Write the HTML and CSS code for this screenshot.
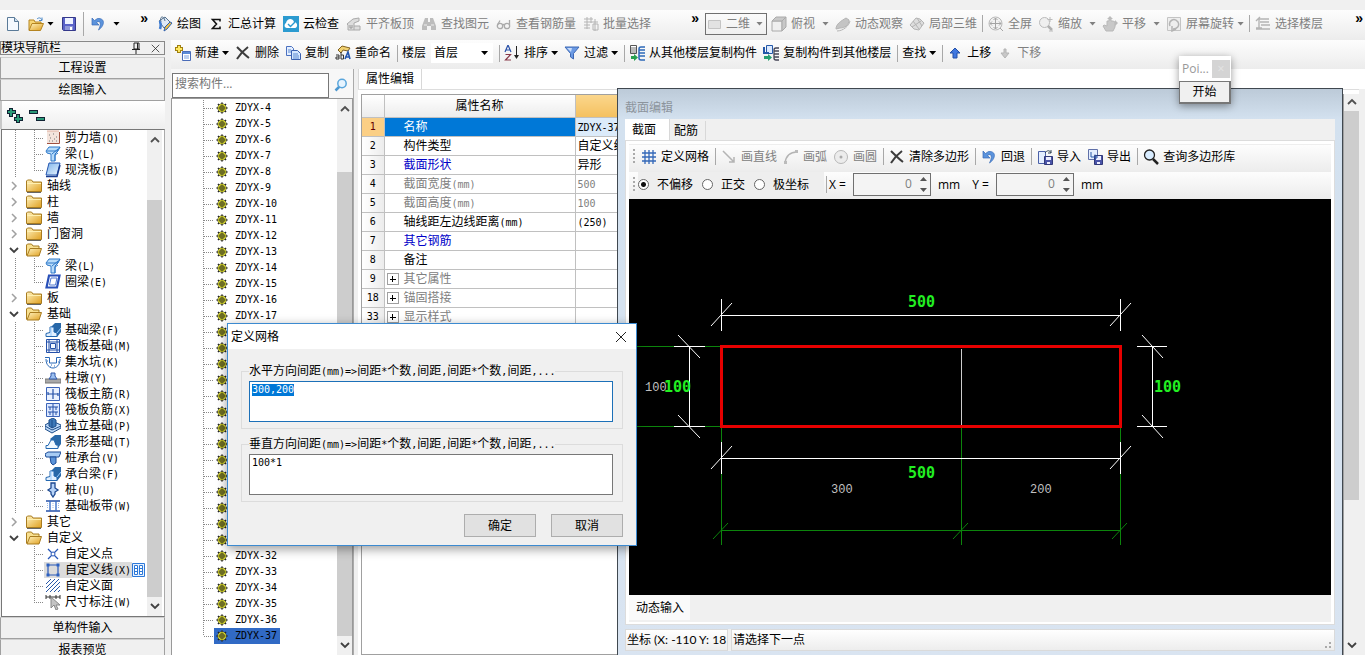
FILE: index.html
```html
<!DOCTYPE html>
<html lang="zh-CN">
<head>
<meta charset="utf-8">
<title>定义网格</title>
<link rel="stylesheet" href="styles.css">
</head>
<body>
<svg class="defs" aria-hidden="true">
  <defs>
    <linearGradient id="gold" x1="0" y1="0" x2="1" y2="1"><stop offset="0" stop-color="#fff3c0"/><stop offset="1" stop-color="#e0a020"/></linearGradient>
    <linearGradient id="sky" x1="0" y1="0" x2="1" y2="1"><stop offset="0" stop-color="#7fb4ea"/><stop offset="1" stop-color="#e8f4ff"/></linearGradient>
  </defs>
  <symbol id="i-new" viewBox="0 0 16 16"><path d="M2.5 1.5h7l4 4v9h-11z" fill="#f4f9ff" stroke="#5a7a98"/><path d="M9.500 1.500v4h4" fill="#cde" stroke="#5a7a98"/></symbol>
  <symbol id="i-open" viewBox="0 0 16 16"><path d="M1 14V4h5l1 2h6v2" fill="#f7d675" stroke="#b58420"/><path d="M1 14.500l3-7h11.500l-3 7z" fill="url(#gold)" stroke="#b58420"/><path d="M9 3c2-2 4-1 5 1m0-2.500V4.500h-3" fill="none" stroke="#4a88c8"/></symbol>
  <symbol id="i-save" viewBox="0 0 16 16"><path d="M1.500 1.500h13v13h-12l-1-1z" fill="#5a62c8" stroke="#34388a"/><path d="M4 2h8v6H4z" fill="#eef2ff"/><path d="M4 10h8v4H4z" fill="#9098d8"/><path d="M9 11h2v3H9z" fill="#fff"/></symbol>
  <symbol id="i-undo" viewBox="0 0 16 16"><path d="M2 2v7h7L6.500 6.500C10 4 12 7 8.500 14c6-4 7.500-12-1-11.500L4.500 4.500z" fill="#5b93dc" stroke="#3a6cb8" stroke-width=".7"/></symbol>
  <symbol id="i-draw" viewBox="0 0 16 16"><path d="M2 5l6-4 5 5-6 6z" fill="#dfe9f5" stroke="#54708c"/><path d="M4 6c-2-6 3-7 4-1" fill="none" stroke="#54708c"/><path d="M2 6c2 0 2 4 1 7" stroke="#3d7ad0" stroke-width="2.500" fill="none"/><path d="M15 7l-5 6-3 2 1-4 5-5z" fill="#f0c040" stroke="#2e60b0"/></symbol>
  <symbol id="i-sum" viewBox="0 0 16 16"><path d="M12 5.500V3.500H4.500l4 4.500-4 4.500H12v-2" fill="none" stroke="#111" stroke-width="1.600"/></symbol>
  <symbol id="i-cloud" viewBox="0 0 16 16"><path d="M0 0h16v16H0z" fill="#2c9bd0"/><path d="M4 12c-3 0-3-4-1-5 1-5 7-5 8-1 4 0 4 6 1 6z" fill="#fff"/><path d="M5 8l2.500 2.500L12 6" fill="none" stroke="#2c9bd0" stroke-width="1.400"/></symbol>
  <symbol id="i-top" viewBox="0 0 16 16"><path d="M1 8l6-5 6-1v3L8 7v7H2V9zM8 10h6v4H8" fill="#ddd" stroke="#aaa"/><path d="M4 9v3h2V9" fill="none" stroke="#999"/></symbol>
  <symbol id="i-find" viewBox="0 0 16 16"><path d="M4 2h3v4h2V2h3l3 8v4h-5v-4H6v4H1v-4z" fill="#bcbcbc"/><path d="M3 9h3m4 0h3" stroke="#eee"/></symbol>
  <symbol id="i-glass" viewBox="0 0 16 16"><g fill="none" stroke="#aaa" stroke-width="1.300"><circle cx="4" cy="10" r="2.700"/><circle cx="11" cy="10" r="2.700"/><path d="M6.500 9q1-1 2 0M1.500 9L4 4.500M13.500 9V4"/></g></symbol>
  <symbol id="i-batch" viewBox="0 0 16 16"><path d="M1 3h9M1 6h14M1 9h6M4 1v12M8 1v6M1 12h6M10 8h5v6h-5zM12 3v12" fill="none" stroke="#b4b4b4"/></symbol>
  <symbol id="i-plane" viewBox="0 0 16 16"><path d="M1.500 4.500h12v8h-12z" fill="#e2e2e2" stroke="#c4c4c4"/></symbol>
  <symbol id="i-cube" viewBox="0 0 16 16"><path d="M1 5h10v10H1z" fill="#efefef" stroke="#aaa"/><path d="M1 5l4-4h10l-4 4zM15 1v10l-4 4V5z" fill="#c8c8c8" stroke="#aaa"/></symbol>
  <symbol id="i-orbit" viewBox="0 0 16 16"><path d="M1 13c0-5 5-8 10-11l3 2c0 5-4 8-9 8z" fill="#c4c4c4" stroke="#b4b4b4"/><path d="M2 15c6 0 12-5 13-10" stroke="#b4b4b4" fill="none"/></symbol>
  <symbol id="i-local" viewBox="0 0 16 16"><path d="M1 9l6-7 4 1 4 4-5 7-5-1z" fill="#ddd" stroke="#b4b4b4"/><path d="M4 5l6 8M8 2l5 8M3 11l9-6" stroke="#b4b4b4"/></symbol>
  <symbol id="i-full" viewBox="0 0 16 16"><circle cx="7.500" cy="7.500" r="6.500" fill="#f2f2f2" stroke="#b8b8b8"/><path d="M7.500 2v11M2 7.500h11M5.500 4l2-2 2 2M5.500 11l2 2 2-2M4 5.500l-2 2 2 2M11 5.500l2 2-2 2M12 12l3 3" stroke="#a4a4a4" fill="none"/></symbol>
  <symbol id="i-zoom" viewBox="0 0 16 16"><circle cx="6.500" cy="6.500" r="5" fill="#efefef" stroke="#bbb"/><path d="M10 10l4 4" stroke="#b0b0b0" stroke-width="2.500"/><path d="M12 1v5M9.500 3.500h5M11 15h4" stroke="#bbb"/></symbol>
  <symbol id="i-hand" viewBox="0 0 16 16"><path d="M4 15l-3-5 1-1 3 1V5h2V3h2v2h2l2 1v5l-2 4z" fill="#c8c8c8" stroke="#b8b8b8"/><path d="M8 0l3 3H5zM16 7l-3 3V4z" fill="#bbb"/></symbol>
  <symbol id="i-rot" viewBox="0 0 16 16"><path d="M1.500 1.500h13v13h-13z" fill="#eee" stroke="#c4c4c4"/><path d="M4 10c-2-5 4-9 8-4 2 4-1 7-5 7m-1-3v5l4-2" fill="none" stroke="#b4b4b4" stroke-width="1.500"/></symbol>
  <symbol id="i-layer" viewBox="0 0 16 16"><path d="M1 5l4-4M3 3h11M5 6h9M4 3v9M6 9h9M1 13h14M1 12h6" stroke="#b4b4b4" stroke-width="1.400" fill="none"/></symbol>
  <symbol id="i-add" viewBox="0 0 16 16"><path d="M4 0v8M0 4h8" stroke="#a08010" stroke-width="4"/><path d="M4 1v6M1 4h6" stroke="#ffe860" stroke-width="2"/><path d="M7.500 6.500h8v9h-8z" fill="#fff" stroke="#4a6cb8"/><path d="M8 7h7v2H8z" fill="#5a8ad8"/><path d="M9 11h5m-5 2h5" stroke="#7aa0e0"/></symbol>
  <symbol id="i-x" viewBox="0 0 16 16"><path d="M2 2c3 3 8 8 12 11M13 2C9 5 5 9 2 14" fill="none" stroke="#3c3c3c" stroke-width="2"/></symbol>
  <symbol id="i-copy" viewBox="0 0 16 16"><path d="M1.500 1.500h5l2 2v7h-7z" fill="#e4efff" stroke="#4a70c0"/><path d="M6.500 5.500h6l3 3v6h-9z" fill="#d4e6ff" stroke="#3a60b0"/><path d="M3 5h3M3 7h3m2 2h5m-5 2h6m-6 2h6" stroke="#5a88d0"/></symbol>
  <symbol id="i-ren" viewBox="0 0 16 16"><path d="M3 5l4-4 8 2-2 3-5-1-2 3z" fill="#f0d070" stroke="#806020"/><path d="M10 14l3-7 2 7m-5-2h5" stroke="#2456b0" stroke-width="1.600" fill="none"/><path d="M1 10h3v4H1v-2h3M6 7v7h2.500v-4H6" stroke="#333" fill="none"/></symbol>
  <symbol id="i-sort" viewBox="0 0 16 16"><path d="M1 7l3-7 3 7M2 5h4" fill="none" stroke="#2850a8" stroke-width="1.200"/><path d="M1.500 9.500h5L1.500 15H7" fill="none" stroke="#883848" stroke-width="1.200"/><path d="M12.500 1v11" stroke="#222"/><path d="M10 10h5l-2.500 4z" fill="#222"/></symbol>
  <symbol id="i-filter" viewBox="0 0 16 16"><path d="M1 2h14L9.500 8.500V14l-3-2V8.500z" fill="#6b9ae4" stroke="#3d68b4"/><path d="M3 3h5l-1 4z" fill="#c8dcfa"/></symbol>
  <symbol id="i-from" viewBox="0 0 16 16"><path d="M1.500.5h6v8h-6z" fill="#fff" stroke="#555"/><path d="M2 3h5M2 5h5M2 7h5" stroke="#777"/><path d="M2 11h3V9l4 3.500L5 16v-2H2z" fill="#28a050"/><path d="M16 2h-4q-2 0-2 2v9q0 2 2 2h4M10 5h6m-6 3h6m-6 3h6" fill="none" stroke="#2c68b8" stroke-width="1.500"/></symbol>
  <symbol id="i-to" viewBox="0 0 16 16"><path d="M3.500.5h6v8h-6z" fill="#dceaff" stroke="#2458a8"/><path d="M1 2v6h5" stroke="#2458a8" stroke-width="2" fill="none"/><path d="M1 11h4V9l4 3.500L5 16v-2H1z" fill="#28a070"/><path d="M16 3h-3q-2 0-2 2v8q0 2 2 2h3M11 6h5m-5 3h5m-5 3h5" fill="none" stroke="#445" stroke-width="1.300"/></symbol>
  <symbol id="i-up" viewBox="0 0 16 16"><path d="M8 3l5 5h-3v5H6V8H3z" fill="#3f77e0" stroke="#2450a8"/></symbol>
  <symbol id="i-down" viewBox="0 0 16 16"><path d="M8 13l4-5h-3V4H7v4H4z" fill="#c8c8c8" stroke="#b4b4b4"/></symbol>
  <symbol id="i-mag" viewBox="0 0 16 16"><path d="M6.500 9.500l-4 4" stroke="#4c98d0" stroke-width="2.500"/><circle cx="9" cy="6.500" r="4.200" fill="#e6f4ff" stroke="#5aa6dc" stroke-width="1.500"/></symbol>
  <symbol id="i-query" viewBox="0 0 16 16"><path d="M10 10l5 5" stroke="#222" stroke-width="2.500"/><circle cx="6.500" cy="6" r="5" fill="#d8ecff" stroke="#222" stroke-width="1.300"/></symbol>
  <symbol id="i-grid" viewBox="0 0 16 16"><path d="M1 4h14M1 8h14M1 12h14M4 1v14M8 1v14M12 1v14" stroke="#3468b8" stroke-width="1.300"/></symbol>
  <symbol id="i-line" viewBox="0 0 16 16"><path d="M2 2l11 11M13 8v5H8" stroke="#b4b4b4" stroke-width="1.500" fill="none"/></symbol>
  <symbol id="i-arc" viewBox="0 0 16 16"><path d="M2 14C3 7 7 3 14 3" stroke="#b4b4b4" stroke-width="1.500" fill="none"/><path d="M1 12h3v3H1zM12 1h3v3h-3z" fill="#bbb"/></symbol>
  <symbol id="i-circ" viewBox="0 0 16 16"><circle cx="8" cy="8" r="6.500" fill="#ececec" stroke="#b8b8b8"/><circle cx="8" cy="8" r="1.500" fill="#aaa"/></symbol>
  <symbol id="i-imp" viewBox="0 0 16 16"><path d="M1.500 2.500h7v12h-7z" fill="#e4eeff" stroke="#4a60a8"/><path d="M7.500 7.500h8v8h-8z" fill="#4a54a8" stroke="#303878"/><path d="M9 8h5v3H9zM10 13h3v2h-3z" fill="#eef"/><path d="M8 4c2-3 5-3 6 0m0-3v3h-3" fill="none" stroke="#345"/></symbol>
  <symbol id="i-exp" viewBox="0 0 16 16"><path d="M1.500.5h9v10h-9z" fill="#e4eeff" stroke="#6070a8"/><path d="M7.500 6.500h8v9h-8z" fill="#4a54a8" stroke="#303878"/><path d="M9 7h5v4H9zM10 13h3v2h-3z" fill="#eef"/><path d="M4 3v5h6M8 5.500L10.500 8 8 10.500" fill="none" stroke="#2858a8"/></symbol>
  <symbol id="i-folder" viewBox="0 0 16 16"><path d="M.5 13.500V3l1-1h4l1.500 2h8.500v9.500z" fill="url(#gold)" stroke="#a87c20"/><path d="M1 5.500h14" stroke="#fff0b0"/><path d="M1 14.500h14" stroke="#666" fill="none"/></symbol>
  <symbol id="i-fopen" viewBox="0 0 16 16"><path d="M.5 13.500V3l1-1h4l1.500 2h6v3" fill="#f8e090" stroke="#a87c20"/><path d="M1 14l3-7.500h11.500l-2.500 7.500z" fill="url(#gold)" stroke="#a87c20"/></symbol>
  <symbol id="i-gear" viewBox="0 0 12 12"><path d="M6 .5v11M.5 6h11M2 2l8 8M10 2l-8 8" stroke="#222" stroke-width="1.600"/><circle cx="6" cy="6" r="4.300" fill="#f6f62a" stroke="#333" stroke-width=".6"/><path d="M6 2.500v7M2.500 6h7M4 4h4v4H4z" fill="none" stroke="#222" stroke-width=".8"/></symbol>
  <symbol id="i-right" viewBox="0 0 12 12"><path d="M4 2l4 4-4 4" fill="none" stroke="#a0a0a0" stroke-width="1.500"/></symbol>
  <symbol id="i-chev" viewBox="0 0 12 12"><path d="M2 4l4 4 4-4" fill="none" stroke="#404040" stroke-width="1.800"/></symbol>
  <symbol id="i-chup" viewBox="0 0 12 12"><path d="M2 8l4-4 4 4" fill="none" stroke="#505050" stroke-width="1.800"/></symbol>
  <symbol id="t-wall" viewBox="0 0 16 16"><path d="M2 1h12v12H2z" fill="#f4e4dc"/><path d="M2 13.500h12.500V2" fill="none" stroke="#a05040"/><path d="M4 5h1m3-1h1m2 3h1M5 8h1m3 1h1M4 11h1m2 0h1m3 0h1" stroke="#777"/><path d="M2 1h12" stroke="#e0b0a0"/></symbol>
  <symbol id="t-beam" viewBox="0 0 16 16"><path d="M1 5l3-4h11l-2 4-3 3v7H6V8L2 7z" fill="#b8dcfa" stroke="#2e78c8"/><path d="M2 5h10l3-4M7 8l6-5M10 15V9l3-2" stroke="#2e78c8" fill="none"/></symbol>
  <symbol id="t-slab" viewBox="0 0 16 16"><path d="M4 1h11l-3 12H1z" fill="url(#sky)" stroke="#2456b0"/><path d="M1 14.500h11L15 3" fill="none" stroke="#183c90" stroke-width="1.500"/></symbol>
  <symbol id="t-ring" viewBox="0 0 16 16"><path d="M4 1.500h10.500l-2.500 12H1.500z" fill="#fff" stroke="#2850b8" stroke-width="2.200"/><path d="M6 4h6l-1.500 7H4.500z" fill="#fff" stroke="#5078d0"/></symbol>
  <symbol id="t-fbeam" viewBox="0 0 16 16"><path d="M6 5l4-4h6v9l-4 5z" fill="#2868a8"/><path d="M1 14.500v-3l4-1V5h4v5l3 1v3.500z" fill="#e2f0ff" stroke="#2468b0"/><path d="M6 5v9m6-3l4-5" stroke="#9cf"/></symbol>
  <symbol id="t-raft" viewBox="0 0 16 16"><path d="M1.500 1.500h13v13h-13zM5.500 5.500h5v5h-5z" fill="#f2f7ff" stroke="#2450a8"/><path d="M1 4h14M1 12h14M4 1v14M12 1v14" stroke="#2450a8"/></symbol>
  <symbol id="t-pit" viewBox="0 0 16 16"><path d="M0 3.500h4.500V9h7V3.500H16M1 5c0 12 14 12 14 0" fill="none" stroke="#2868b8"/><path d="M2 7h1m3 4h1m2 1h1m3-4h1M5 13h1" stroke="#2868b8"/></symbol>
  <symbol id="t-pier" viewBox="0 0 16 16"><path d="M0 9h16v4H0z" fill="#a8a8a8" stroke="#777"/><path d="M6 3h4v3l2 3H4l2-3z" fill="#9cc0f0" stroke="#3058a8"/></symbol>
  <symbol id="t-bar" viewBox="0 0 16 16"><path d="M1.500 1.500h13v13h-13z" fill="#eaf2ff" stroke="#3c64b8"/><path d="M8 3v10M3 8h10M3 6v3M13 7v3" fill="none" stroke="#2450a8" stroke-width="1.200"/></symbol>
  <symbol id="t-nbar" viewBox="0 0 16 16"><path d="M1.500 1.500h13v13h-13z" fill="#dce8ff" stroke="#3c64b8"/><path d="M8 2v12M3 5h10M3 10h10M5 5v3m6-3v3m-6 2v3m6-3v3" fill="none" stroke="#2450a8"/></symbol>
  <symbol id="t-iso" viewBox="0 0 16 16"><path d="M0 7l7-4 9 4v3l-9 5-7-4z" fill="#bcd8f8" stroke="#1c4c88"/><path d="M4 2l4-2 3 2v6l-4 2-3-2z" fill="#3c78b8" stroke="#1c4c88"/><path d="M0 8l7 4 9-4M7 2v8" stroke="#1c4c88" fill="none"/></symbol>
  <symbol id="t-strip" viewBox="0 0 16 16"><path d="M5 5l5-4h6v9l-3 4z" fill="#2868a8"/><path d="M1 14.500v-3h2L6 6h3l2 5h2v3.500z" fill="#f0f8ff" stroke="#2468b0"/></symbol>
  <symbol id="t-cap" viewBox="0 0 16 16"><path d="M0 4l3-2h13l-2 5H1z" fill="#a8ccf4" stroke="#1c4c98"/><path d="M5 7h6v6l-3 2-2-2z" fill="#5c94d8" stroke="#1c4c98"/></symbol>
  <symbol id="t-pile" viewBox="0 0 16 16"><path d="M6 1h4v5l3 2-3 2v2l-2 3-2-3v-2L3 8l3-2z" fill="#b8d4f8" stroke="#1c4890" stroke-width="1.300"/></symbol>
  <symbol id="t-band" viewBox="0 0 16 16"><path d="M1 3h14M1 13h14" stroke="#2450a8" stroke-width="1.400"/><path d="M5 3v10M11 3v10" stroke="#3c70c8" stroke-width="1.400"/><path d="M2.500 5v6M8 5v6M13.500 5v6" stroke="#9ab8e8" stroke-dasharray="1 1"/></symbol>
  <symbol id="t-pt" viewBox="0 0 16 16"><path d="M3 3l10 10M13 3L3 13" stroke="#2858b8" stroke-width="1.300"/><circle cx="8" cy="8" r="2" fill="#fff" stroke="#2858b8"/></symbol>
  <symbol id="t-ln" viewBox="0 0 16 16"><path d="M3 3h10v10H3z" fill="none" stroke="#2858b8" stroke-width="1.200"/><path d="M1.500 1.500h3v3h-3zM11.500 1.500h3v3h-3zM1.500 11.500h3v3h-3zM11.500 11.500h3v3h-3z" fill="#2c60c0"/></symbol>
  <symbol id="t-face" viewBox="0 0 16 16"><path d="M1 6l5-5M1 10l9-9M1 14l13-13M5 14l10-10M9 14l6-6M13 14l2-2" stroke="#2858a8"/></symbol>
  <symbol id="t-dim" viewBox="0 0 16 16"><path d="M1 1v4m14-4v4M1 3h14M5 1v4m6-4v4" stroke="#333"/><path d="M6 3v11l3-3 2 5 2-1-2-4h4z" fill="#c4c4c4" stroke="#888"/></symbol>
  <symbol id="i-pin" viewBox="0 0 12 12"><path d="M4 1h5v6H4zM2 7.500h8M6 8v4M7.500 1v6" fill="none" stroke="#222"/></symbol>
  <symbol id="i-close" viewBox="0 0 12 12"><path d="M1 1l10 10M11 1L1 11" stroke="#222" fill="none"/></symbol>
</svg>

<header class="topbars">
  <div class="bar quick">
    <button title="新建"><svg class="ic"><use href="#i-new"/></svg></button>
    <button title="打开"><svg class="ic"><use href="#i-open"/></svg><i class="arr"></i></button>
    <button title="保存"><svg class="ic"><use href="#i-save"/></svg></button>
    <i class="sep"></i>
    <button title="撤销"><svg class="ic"><use href="#i-undo"/></svg><i class="arr wide"></i></button>
    <span class="more">»</span>
  </div>
  <div class="bar draw">
    <button><svg class="ic"><use href="#i-draw"/></svg>绘图</button>
    <button><svg class="ic"><use href="#i-sum"/></svg>汇总计算</button>
    <button><svg class="ic"><use href="#i-cloud"/></svg>云检查</button>
    <button disabled><svg class="ic"><use href="#i-top"/></svg>平齐板顶</button>
    <button disabled><svg class="ic"><use href="#i-find"/></svg>查找图元</button>
    <button disabled><svg class="ic"><use href="#i-glass"/></svg>查看钢筋量</button>
    <button disabled><svg class="ic"><use href="#i-batch"/></svg>批量选择</button>
    <span class="more">»</span>
  </div>
  <div class="bar view">
    <button class="boxed" disabled><svg class="ic"><use href="#i-plane"/></svg>二维<i class="arr wide"></i></button>
    <button disabled><svg class="ic"><use href="#i-cube"/></svg>俯视<i class="arr wide"></i></button>
    <button disabled><svg class="ic"><use href="#i-orbit"/></svg>动态观察</button>
    <button disabled><svg class="ic"><use href="#i-local"/></svg>局部三维</button>
    <i class="sep"></i>
    <button disabled><svg class="ic"><use href="#i-full"/></svg>全屏</button>
    <button disabled><svg class="ic"><use href="#i-zoom"/></svg>缩放<i class="arr wide"></i></button>
    <button disabled><svg class="ic"><use href="#i-hand"/></svg>平移<i class="arr wide"></i></button>
    <button disabled><svg class="ic"><use href="#i-rot"/></svg>屏幕旋转<i class="arr"></i></button>
    <i class="sep"></i>
    <button disabled><svg class="ic"><use href="#i-layer"/></svg>选择楼层</button>
    <span class="more">»</span>
  </div>
</header>

<main class="work">
  <nav class="nav">
    <div class="nav-title"><span>模块导航栏</span><svg class="i12"><use href="#i-pin"/></svg><svg class="i12 s10"><use href="#i-close"/></svg></div>
    <button class="nav-btn">工程设置</button>
    <button class="nav-btn">绘图输入</button>
    <div class="nav-tools">
      <button title="展开"><svg width="18" height="16" viewBox="0 0 18 16"><g stroke="#123" stroke-width="4"><path d="M5 1v9M1 5h9M12 7v9M8 12h9"/></g><g stroke="#2a9a78" stroke-width="2"><path d="M5 2v7M2 5h7M12 8v7M9 12h7"/></g></svg></button>
      <button title="折叠"><svg width="18" height="16" viewBox="0 0 18 16"><path d="M1 5h9M8 12h9" stroke="#123" stroke-width="4"/><path d="M2 5h7M9 12h7" stroke="#2a9a78" stroke-width="2"/></svg></button>
    </div>
    <div class="tree-box">
      <ul class="tree">
        <li><i class="g"></i><svg class="ic"><use href="#t-wall"/></svg><span>剪力墙<b>(Q)</b></span></li>
        <li><i class="g"></i><svg class="ic"><use href="#t-beam"/></svg><span>梁<b>(L)</b></span></li>
        <li><i class="g end"></i><svg class="ic"><use href="#t-slab"/></svg><span>现浇板<b>(B)</b></span></li>
        <li class="p"><svg class="i12"><use href="#i-right"/></svg><svg class="ic"><use href="#i-folder"/></svg><span>轴线</span></li>
        <li class="p"><svg class="i12"><use href="#i-right"/></svg><svg class="ic"><use href="#i-folder"/></svg><span>柱</span></li>
        <li class="p"><svg class="i12"><use href="#i-right"/></svg><svg class="ic"><use href="#i-folder"/></svg><span>墙</span></li>
        <li class="p"><svg class="i12"><use href="#i-right"/></svg><svg class="ic"><use href="#i-folder"/></svg><span>门窗洞</span></li>
        <li class="p"><svg class="i12"><use href="#i-chev"/></svg><svg class="ic"><use href="#i-fopen"/></svg><span>梁</span></li>
        <li><i class="g"></i><svg class="ic"><use href="#t-beam"/></svg><span>梁<b>(L)</b></span></li>
        <li><i class="g end"></i><svg class="ic"><use href="#t-ring"/></svg><span>圈梁<b>(E)</b></span></li>
        <li class="p"><svg class="i12"><use href="#i-right"/></svg><svg class="ic"><use href="#i-folder"/></svg><span>板</span></li>
        <li class="p"><svg class="i12"><use href="#i-chev"/></svg><svg class="ic"><use href="#i-fopen"/></svg><span>基础</span></li>
        <li><i class="g"></i><svg class="ic"><use href="#t-fbeam"/></svg><span>基础梁<b>(F)</b></span></li>
        <li><i class="g"></i><svg class="ic"><use href="#t-raft"/></svg><span>筏板基础<b>(M)</b></span></li>
        <li><i class="g"></i><svg class="ic"><use href="#t-pit"/></svg><span>集水坑<b>(K)</b></span></li>
        <li><i class="g"></i><svg class="ic"><use href="#t-pier"/></svg><span>柱墩<b>(Y)</b></span></li>
        <li><i class="g"></i><svg class="ic"><use href="#t-bar"/></svg><span>筏板主筋<b>(R)</b></span></li>
        <li><i class="g"></i><svg class="ic"><use href="#t-nbar"/></svg><span>筏板负筋<b>(X)</b></span></li>
        <li><i class="g"></i><svg class="ic"><use href="#t-iso"/></svg><span>独立基础<b>(P)</b></span></li>
        <li><i class="g"></i><svg class="ic"><use href="#t-strip"/></svg><span>条形基础<b>(T)</b></span></li>
        <li><i class="g"></i><svg class="ic"><use href="#t-cap"/></svg><span>桩承台<b>(V)</b></span></li>
        <li><i class="g"></i><svg class="ic"><use href="#t-fbeam"/></svg><span>承台梁<b>(F)</b></span></li>
        <li><i class="g"></i><svg class="ic"><use href="#t-pile"/></svg><span>桩<b>(U)</b></span></li>
        <li><i class="g end"></i><svg class="ic"><use href="#t-band"/></svg><span>基础板带<b>(W)</b></span></li>
        <li class="p"><svg class="i12"><use href="#i-right"/></svg><svg class="ic"><use href="#i-folder"/></svg><span>其它</span></li>
        <li class="p"><svg class="i12"><use href="#i-chev"/></svg><svg class="ic"><use href="#i-fopen"/></svg><span>自定义</span></li>
        <li><i class="g tail"></i><svg class="ic"><use href="#t-pt"/></svg><span>自定义点</span></li>
        <li class="cur"><i class="g tail"></i><svg class="ic"><use href="#t-ln"/></svg><span>自定义线<b>(X)</b></span><svg width="13" height="14" viewBox="0 0 13 14"><path d="M.5.5h12v13H.5z" fill="#e8f2ff" stroke="#2c78d8"/><path d="M2.500 2.500h3v9h-3zM7.500 2.500h3v9h-3zM3 5.500h2m-2 3h2m3-3h2m-2 3h2" fill="#fff" stroke="#2c78d8"/></svg></li>
        <li><i class="g tail"></i><svg class="ic"><use href="#t-face"/></svg><span>自定义面</span></li>
        <li><i class="g tail last"></i><svg class="ic"><use href="#t-dim"/></svg><span>尺寸标注<b>(W)</b></span></li>
      </ul>
      <div class="scroll nav-scroll"><svg class="i12"><use href="#i-chup"/></svg><i class="thumb"></i><svg class="i12"><use href="#i-chev"/></svg></div>
    </div>
    <button class="nav-btn">单构件输入</button>
    <button class="nav-btn">报表预览</button>
  </nav>

  <div class="main">
    <div class="bar comp">
      <button><svg class="ic"><use href="#i-add"/></svg>新建<i class="arr"></i></button>
      <button><svg class="ic"><use href="#i-x"/></svg>删除</button>
      <button><svg class="ic"><use href="#i-copy"/></svg>复制</button>
      <button><svg class="ic"><use href="#i-ren"/></svg>重命名</button>
      <i class="sep"></i>
      <label class="floor">楼层<span class="sel"><select><option>首层</option></select><i class="arr"></i></span></label>
      <i class="sep"></i>
      <button><svg class="ic"><use href="#i-sort"/></svg>排序<i class="arr"></i></button>
      <button><svg class="ic"><use href="#i-filter"/></svg>过滤<i class="arr"></i></button>
      <i class="sep"></i>
      <button><svg class="ic"><use href="#i-from"/></svg>从其他楼层复制构件</button>
      <button><svg class="ic"><use href="#i-to"/></svg>复制构件到其他楼层</button>
      <i class="sep"></i>
      <button>查找<i class="arr"></i></button>
      <i class="sep"></i>
      <button><svg class="ic"><use href="#i-up"/></svg>上移</button>
      <button disabled><svg class="ic"><use href="#i-down"/></svg>下移</button>
    </div>
    <div class="panes">
      <section class="list">
        <div class="search"><input type="text" placeholder="搜索构件..." aria-label="搜索构件"><button title="搜索"><svg class="ic"><use href="#i-mag"/></svg></button></div>
        <div class="list-box">
          <ul class="items">
            <li><svg><use href="#i-gear"/></svg><span>ZDYX-4</span></li>
            <li><svg><use href="#i-gear"/></svg><span>ZDYX-5</span></li>
            <li><svg><use href="#i-gear"/></svg><span>ZDYX-6</span></li>
            <li><svg><use href="#i-gear"/></svg><span>ZDYX-7</span></li>
            <li><svg><use href="#i-gear"/></svg><span>ZDYX-8</span></li>
            <li><svg><use href="#i-gear"/></svg><span>ZDYX-9</span></li>
            <li><svg><use href="#i-gear"/></svg><span>ZDYX-10</span></li>
            <li><svg><use href="#i-gear"/></svg><span>ZDYX-11</span></li>
            <li><svg><use href="#i-gear"/></svg><span>ZDYX-12</span></li>
            <li><svg><use href="#i-gear"/></svg><span>ZDYX-13</span></li>
            <li><svg><use href="#i-gear"/></svg><span>ZDYX-14</span></li>
            <li><svg><use href="#i-gear"/></svg><span>ZDYX-15</span></li>
            <li><svg><use href="#i-gear"/></svg><span>ZDYX-16</span></li>
            <li><svg><use href="#i-gear"/></svg><span>ZDYX-17</span></li>
            <li><svg><use href="#i-gear"/></svg><span>ZDYX-18</span></li>
            <li><svg><use href="#i-gear"/></svg><span>ZDYX-19</span></li>
            <li><svg><use href="#i-gear"/></svg><span>ZDYX-20</span></li>
            <li><svg><use href="#i-gear"/></svg><span>ZDYX-21</span></li>
            <li><svg><use href="#i-gear"/></svg><span>ZDYX-22</span></li>
            <li><svg><use href="#i-gear"/></svg><span>ZDYX-23</span></li>
            <li><svg><use href="#i-gear"/></svg><span>ZDYX-24</span></li>
            <li><svg><use href="#i-gear"/></svg><span>ZDYX-25</span></li>
            <li><svg><use href="#i-gear"/></svg><span>ZDYX-26</span></li>
            <li><svg><use href="#i-gear"/></svg><span>ZDYX-27</span></li>
            <li><svg><use href="#i-gear"/></svg><span>ZDYX-28</span></li>
            <li><svg><use href="#i-gear"/></svg><span>ZDYX-29</span></li>
            <li><svg><use href="#i-gear"/></svg><span>ZDYX-30</span></li>
            <li><svg><use href="#i-gear"/></svg><span>ZDYX-31</span></li>
            <li><svg><use href="#i-gear"/></svg><span>ZDYX-32</span></li>
            <li><svg><use href="#i-gear"/></svg><span>ZDYX-33</span></li>
            <li><svg><use href="#i-gear"/></svg><span>ZDYX-34</span></li>
            <li><svg><use href="#i-gear"/></svg><span>ZDYX-35</span></li>
            <li><svg><use href="#i-gear"/></svg><span>ZDYX-36</span></li>
            <li class="cur"><svg><use href="#i-gear"/></svg><span>ZDYX-37</span></li>
          </ul>
          <div class="scroll list-scroll"><svg class="i12"><use href="#i-chup"/></svg><i class="thumb"></i><svg class="i12"><use href="#i-chev"/></svg></div>
        </div>
      </section>

      <section class="props">
        <div class="ptabs"><button class="ptab">属性编辑</button></div>
        <div class="pbody">
          <div class="pgrid">
            <table>
              <colgroup><col class="c-no"><col class="c-name"><col></colgroup>
              <thead><tr><th></th><th>属性名称</th><th class="hot"></th></tr></thead>
              <tbody>
                <tr class="on"><th>1</th><td>名称</td><td><b>ZDYX-37</b></td></tr>
                <tr><th>2</th><td>构件类型</td><td>自定义线</td></tr>
                <tr class="blue"><th>3</th><td>截面形状</td><td>异形</td></tr>
                <tr class="dim"><th>4</th><td>截面宽度<b>(mm)</b></td><td><b>500</b></td></tr>
                <tr class="dim"><th>5</th><td>截面高度<b>(mm)</b></td><td><b>100</b></td></tr>
                <tr><th>6</th><td>轴线距左边线距离<b>(mm)</b></td><td><b>(250)</b></td></tr>
                <tr class="blue"><th>7</th><td>其它钢筋</td><td></td></tr>
                <tr><th>8</th><td>备注</td><td></td></tr>
                <tr class="dim grp"><th>9</th><td><button title="展开"></button>其它属性</td><td></td></tr>
                <tr class="dim grp"><th>18</th><td><button title="展开"></button>锚固搭接</td><td></td></tr>
                <tr class="dim grp"><th>33</th><td><button title="展开"></button>显示样式</td><td></td></tr>
              </tbody>
            </table>
          </div>
          <div class="scroll prop-scroll"><svg class="i12"><use href="#i-chup"/></svg><i class="thumb"></i><svg class="i12"><use href="#i-chev"/></svg></div>
        </div>
      </section>
    </div>
  </div>
</main>

<section class="win section-win">
  <div class="sw-title">截面编辑</div>
  <div class="sw-tabs"><button class="on">截面</button><button>配筋</button></div>
  <div class="sw-page">
    <div class="bar sw-bar">
      <i class="grip"></i>
      <button><svg class="ic"><use href="#i-grid"/></svg>定义网格</button>
      <i class="sep"></i>
      <button disabled><svg class="ic"><use href="#i-line"/></svg>画直线</button>
      <button disabled><svg class="ic"><use href="#i-arc"/></svg>画弧</button>
      <button disabled><svg class="ic"><use href="#i-circ"/></svg>画圆</button>
      <i class="sep"></i>
      <button><svg class="ic"><use href="#i-x"/></svg>清除多边形</button>
      <i class="sep"></i>
      <button><svg class="ic"><use href="#i-undo"/></svg>回退</button>
      <i class="sep"></i>
      <button><svg class="ic"><use href="#i-imp"/></svg>导入</button>
      <button><svg class="ic"><use href="#i-exp"/></svg>导出</button>
      <i class="sep"></i>
      <button><svg class="ic"><use href="#i-query"/></svg>查询多边形库</button>
    </div>
    <div class="bar sw-opts">
      <i class="grip"></i>
      <div class="radios">
        <label><input type="radio" name="off" checked>不偏移</label>
        <label><input type="radio" name="off">正交</label>
        <label><input type="radio" name="off">极坐标</label>
      </div>
      <i class="sep"></i>
      <label class="coord">X =<span class="spin"><input type="text" value="0"><i></i></span>mm</label>
      <label class="coord">Y =<span class="spin"><input type="text" value="0"><i></i></span>mm</label>
    </div>
    <div class="canvas">
      <svg width="703" height="396" viewBox="629 199 703 396">
        <g stroke="#0c840c" fill="none">
          <path shape-rendering="crispEdges" d="M629 346.500h93M629 426.500h93M721.500 427v118M961.500 427v118M1120.500 427v118M721 530.500h400"/>
          <path d="M713 539l15-16M953 539l15-16M1112 539l15-16"/>
        </g>
        <path d="M961.500 349v77" stroke="#ccc" shape-rendering="crispEdges"/>
        <g stroke="#fff" fill="none">
          <path shape-rendering="crispEdges" d="M721 315.500h400M721.500 299v32M1120.500 299v32M721 458.500h400M721.500 442v32M1120.500 442v32M689.500 346v81M674 346.500h31M674 426.500h31M1137 346.500h30M1137 426.500h30M1152.500 346v81"/>
          <path d="M711 326l21-23M1110 326l21-23M711 469l21-23M1110 469l21-23M678 335l22 23M678 415l22 23M1142 335l21 23M1142 415l21 23"/>
        </g>
        <path d="M721.500 346.500h399v80h-399z" fill="none" stroke="#e60000" stroke-width="3"/>
        <g class="dim-main"><text x="908" y="307">500</text><text x="908" y="478">500</text><text x="664" y="392">100</text><text x="1154" y="392">100</text></g>
        <g class="dim-sub"><text x="831" y="493">300</text><text x="1030" y="493">200</text><text x="645" y="391">100</text></g>
      </svg>
    </div>
    <div class="dyn"><button>动态输入</button></div>
  </div>
  <div class="status"><span class="pos">坐标 (X: -110 Y: 18</span><span class="msg">请选择下一点</span></div>
</section>

<section class="win poi">
  <div class="poi-title"><span>Poi...</span><button title="关闭">×</button></div>
  <button class="poi-go">开始</button>
</section>

<form class="win dialog">
  <div class="dlg-title"><span>定义网格</span><button type="button" title="关闭"><svg class="i12"><use href="#i-close"/></svg></button></div>
  <div class="dlg-body">
    <fieldset>
      <legend><label for="hgap">水平方向间距<b>(mm)=&gt;</b>间距<b>*</b>个数<b>,</b>间距<b>,</b>间距<b>*</b>个数<b>,</b>间距<b>,...</b></label></legend>
      <textarea id="hgap">300,200</textarea>
    </fieldset>
    <fieldset>
      <legend><label for="vgap">垂直方向间距<b>(mm)=&gt;</b>间距<b>*</b>个数<b>,</b>间距<b>,</b>间距<b>*</b>个数<b>,</b>间距<b>,...</b></label></legend>
      <textarea id="vgap">100*1</textarea>
    </fieldset>
    <div class="dlg-btns"><button type="button">确定</button><button type="button">取消</button></div>
  </div>
</form>
<script src="main.js"></script>
</body>
</html>
```

FILE: styles.css
```css
* { box-sizing: border-box; }
html, body { height: 100%; }
body {
  margin: 0;
  display: flex;
  flex-direction: column;
  overflow: hidden;
  background: #f0f0f0;
  color: #000;
  font: 12px/16px "Open Sans", "Noto Sans CJK SC", sans-serif;
  white-space: nowrap;
}
button, input, select, textarea { font: inherit; color: inherit; margin: 0; }
button { border: 0; background: none; padding: 0; white-space: nowrap; }
ul { list-style: none; margin: 0; padding: 0; }
b { font: 10px/12px "DejaVu Sans Mono", monospace; }
.defs { position: absolute; width: 0; height: 0; }
.ic { width: 16px; height: 16px; flex: none; }
.i12 { width: 12px; height: 12px; flex: none; }
.s10 { width: 9px; height: 9px; }

/* toolbars */
.bar {
  display: flex;
  align-items: center;
  gap: 7px;
  background: linear-gradient(#fdfdfd, #ececec);
}
.bar button { display: flex; align-items: center; gap: 4px; }
.bar button:disabled { color: #808080; }
.arr {
  flex: none;
  width: 7px;
  height: 4px;
  margin-left: -1px;
  background: currentColor;
  clip-path: polygon(0 0, 100% 0, 50% 100%);
}
.arr.wide { margin-left: 3px; }
.sep { flex: none; width: 1px; height: 17px; margin: 0 -1px; background: #a8a8a8; }
.more { margin-left: auto; font: bold 14px/16px "Liberation Sans", sans-serif; align-self: flex-start; }

.topbars { display: flex; flex: none; height: 30px; margin-top: 10px; }
.topbars .bar { height: 30px; padding-bottom: 3px; }
.quick { width: 153px; padding: 0 5px; }
.quick .sep { height: 24px; }
.draw { width: 549px; padding: 0 3px 0 4px; }
.view { flex: 1; gap: 6px; padding: 0 2px 0 3px; }
.bar .boxed { height: 22px; width: 62px; padding-left: 1px; gap: 3px; border: 1px solid #707070; margin-right: -2px; }

.work { display: flex; flex: 1; min-height: 0; }

/* module navigation */
.nav { display: flex; flex-direction: column; flex: none; width: 165px; padding-top: 1px; overflow: hidden; }
.nav-title { display: flex; align-items: center; gap: 9px; flex: none; height: 14px; border: 1px solid #888; padding-right: 4px; }
.nav-title span { flex: 1; }
.nav-btn { flex: none; height: 22px; border: 1px solid #a0a0a0; border-top-color: #d0d0d0; background: #f0f0f0; }
.nav-title + .nav-btn { margin-top: 2px; }
.nav-tools { display: flex; gap: 4px; flex: none; align-items: center; height: 28px; padding-left: 4px; border-left: 2px solid #c8c8c8; background: linear-gradient(#fff, #eee); }
.nav-tools svg { display: block; }
.tree-box { display: flex; flex: none; height: 488px; padding-left: 1px; margin-left: 1px; border: 1px solid #777; border-right-color: #aaa; background: #fff; }
.tree { flex: 1; min-width: 0; }
.tree li { display: flex; align-items: center; height: 16px; gap: 1px; }
.tree li span { padding: 0 0 0 3px; }
.tree .p { padding-left: 5px; gap: 6px; }
.tree .p span { padding: 0; margin-left: -1px; }
.tree .cur { background: linear-gradient(#dcdcdc, #dcdcdc) 41px 0 / 88px 100% no-repeat; }
.g {
  --v: repeating-linear-gradient(#888 0 1px, transparent 1px 2px);
  --h: repeating-linear-gradient(90deg, #888 0 1px, transparent 1px 2px);
  flex: none;
  width: 41px;
  height: 16px;
  background: var(--v) 12px 0 / 1px 16px no-repeat, var(--v) 31px 0 / 1px 16px no-repeat, var(--h) 31px 8px / 10px 1px no-repeat;
}
.g.end { background-size: 1px 16px, 1px 8px, 10px 1px; }
.g.tail { background-size: 0 0, 1px 16px, 10px 1px; }
.g.last { background-size: 0 0, 1px 8px, 10px 1px; }

/* scroll bars */
.scroll { display: flex; flex-direction: column; align-items: center; flex: none; width: 15px; background: #f0f0f0; padding: 4px 0; gap: 3px; }
.thumb { width: 100%; flex: 1; background: #cdcdcd; }
.nav-scroll { margin-right: 2px; }
.nav-scroll .thumb { margin-top: 51px; }
.list-scroll .thumb { margin-top: 54px; }
.prop-scroll { padding-top: 2px; }
.prop-scroll .thumb { flex: 0 0 70%; margin-bottom: auto; }

/* component list */
.main { display: flex; flex-direction: column; flex: 1; min-width: 0; margin-left: 6px; }
.comp { flex: none; height: 29px; gap: 6px; padding: 0 4px 3px; }
.comp .sep { margin: 0 -2px 0 0; }
.floor { display: flex; align-items: center; gap: 5px; }
.sel { display: flex; align-items: center; width: 62px; height: 20px; background: #fff; }
.sel select { flex: 1; min-width: 0; appearance: none; border: 0; padding: 0 3px; background: none; }
.sel .arr { margin-right: 5px; }
.panes { display: flex; flex: 1; min-height: 0; }
.list { display: flex; flex-direction: column; flex: none; width: 183px; padding-top: 3px; border-right: 1px solid #aaa; background: #f7f7f7; }
.search { display: flex; align-items: center; flex: none; height: 26px; gap: 4px; padding-left: 1px; }
.search input { width: 157px; height: 25px; border: 1px solid #777; padding: 0 2px 4px; background: #fff; }
.search input::placeholder { color: #777; opacity: 1; }
.search button svg { display: block; }
.list-box { display: flex; flex: 1; min-height: 0; width: 182px; border: 1px solid #999; border-bottom: 0; background: #fff; }
.items { flex: 1; min-width: 0; overflow: hidden; padding-top: 2px; margin-top: -1px; }
.items li {
  display: flex;
  align-items: center;
  height: 16px;
  padding-left: 44px;
  font: 10px/16px "DejaVu Sans Mono", monospace;
  background: repeating-linear-gradient(#888 0 1px, transparent 1px 2px) 31px 0 / 1px 100% no-repeat, repeating-linear-gradient(90deg, #888 0 1px, transparent 1px 2px) 32px 8px / 10px 1px no-repeat;
}
.items svg { width: 12px; height: 12px; }
.items span { padding: 0 3px 0 7px; }
.items .cur { background-size: 1px 8px, 10px 1px; }
.items .cur svg, .items .cur span { height: 16px; background: #316ac5; }
.items .cur svg { width: 16px; margin: 0 -2px; padding: 2px; }

/* property editor */
.props { display: flex; flex-direction: column; flex: 1; min-width: 0; padding-left: 4px; }
.ptabs { flex: none; height: 20px; background: #fff; }
.ptab { height: 20px; padding: 0 7px; border: 1px solid #d8d8d8; border-top: 0; border-bottom: 0; }
.pbody { display: flex; flex: 1; min-height: 0; margin-right: 6px; padding: 4px 0 0 3px; background: #fff; border-top: 1px solid #ddd; }
.pgrid { flex: 1; min-width: 0; border: 1px solid #a0a0a0; overflow: hidden; }
.pgrid table { width: 100%; border-collapse: collapse; table-layout: fixed; }
.c-no { width: 22px; }
.c-name { width: 191px; }
.pgrid th, .pgrid td { height: 19px; padding: 0; border: solid #c0c0c0; border-width: 0 1px 1px 0; font-weight: normal; text-align: left; line-height: 16px; }
.pgrid thead th { height: 22px; text-align: center; background: linear-gradient(#fff, #ececec); }
.pgrid thead .hot { background: linear-gradient(#fbd68c, #f4c060); }
.pgrid tbody th { text-align: center; background: linear-gradient(90deg, #fff, #ececec); font: 10px/16px "DejaVu Sans Mono", monospace; }
.pgrid td:nth-child(2) { padding-left: 19px; }
.pgrid td:nth-child(3) { padding-left: 2px; }
.pgrid .on th { background: #fbcf85; color: #600; }
.pgrid .on td:nth-child(2) { background: #0078d7; color: #fff; }
.pgrid .on td:nth-child(3) { background: #dcebfa; }
.pgrid .blue td:nth-child(2) { color: #0000c8; }
.pgrid .dim td { color: #808080; }
.pgrid .grp td:nth-child(2) { padding-left: 2px; }
.grp button {
  width: 12px;
  height: 12px;
  margin-right: 5px;
  vertical-align: middle;
  border: 1px solid #a0a0a0;
  background: linear-gradient(#000, #000) center / 6px 1px no-repeat, linear-gradient(#000, #000) center / 1px 6px no-repeat;
}

/* floating windows */
.win { position: absolute; display: flex; flex-direction: column; }
.section-win {
  left: 617px;
  right: 22px;
  top: 88px;
  bottom: 0;
  padding: 0 7px;
  border: 1px solid #404850;
  border-bottom: 0;
  background: linear-gradient(#bccad8, #d3e1ef 30px, #d9e4f1);
}
.sw-title { flex: none; height: 30px; padding-top: 11px; color: #8c949c; }
.sw-tabs { display: flex; align-items: flex-end; flex: none; height: 21px; background: #f0f0f0; }
.sw-tabs button { height: 19px; padding: 0 7px 0 4px; border-right: 1px solid #d8d8d8; }
.sw-tabs .on { height: 21px; padding: 0 13px 0 7px; background: #fff; }
.sw-page { display: flex; flex-direction: column; flex: 1; min-height: 0; padding: 3px 3px 2px; border: 1px solid #dcdcdc; background: #fff; }
.sw-bar { flex: none; height: 28px; padding: 0 0 4px 4px; gap: 6px; border-top: 1px solid #eee; }
.sw-bar .sep { margin: 0 -1px 0 0; }
.sw-opts { flex: none; height: 27px; padding: 0 0 2px 4px; gap: 3px; }
.grip { flex: none; width: 2px; height: 15px; background: repeating-linear-gradient(#aaa 0 2px, transparent 2px 4px); }
.radios { display: flex; gap: 9px; height: 25px; padding-right: 15px; background: #eee; }
.radios label { display: flex; align-items: center; gap: 8px; }
.radios input { appearance: none; width: 11px; height: 11px; border: 1px solid #666; border-radius: 50%; background: #fff; }
.radios input:checked { background: radial-gradient(#111 0 2px, #fff 3px); }
.coord { display: flex; align-items: center; gap: 7px; }
.coord + .coord { margin-left: 9px; }
.spin { display: flex; width: 78px; height: 23px; border: 1px solid #707070; background: #f4f4f4; }
.spin input { flex: 1; min-width: 0; padding: 0 8px 2px 0; border: 0; background: none; text-align: right; color: #808080; }
.spin i { width: 7px; height: 15px; margin: 3px 3px 0 0; background: #555; clip-path: polygon(0 4px, 50% 0, 100% 4px, 0 4px, 0 11px, 100% 11px, 50% 100%, 0 11px); }
.canvas { flex: 1; min-height: 0; overflow: hidden; background: #000; }
.canvas svg { display: block; }
.dim-main { fill: #22ee22; font: bold 15px "DejaVu Sans Mono", monospace; }
.dim-sub { fill: #c0c0c0; font: 12px "Liberation Mono", monospace; }
.dyn { flex: none; height: 27px; background: #f0f0f0; }
.dyn button { height: 25px; padding: 0 6px 0 7px; background: #fafafa; }
.status { display: flex; flex: none; gap: 3px; height: 22px; margin: 4px 0 4px; background: #f0f0f0; }
.status span { padding: 2px 1px; border: 1px solid #dadada; background: linear-gradient(#fff, #ededed); }
.pos { min-width: 97px; font-family: Lato, "Noto Sans CJK SC", sans-serif; }
.status .msg {
  flex: 1;
  background:
    radial-gradient(#aaa 1px, transparent 1px) right 2px bottom 1px / 4px 4px no-repeat,
    radial-gradient(#aaa 1px, transparent 1px) right 6px bottom 1px / 4px 4px no-repeat,
    radial-gradient(#aaa 1px, transparent 1px) right 2px bottom 5px / 4px 4px no-repeat,
    linear-gradient(#fff, #ededed);
}

.poi { left: 1179px; top: 56px; width: 52px; height: 48px; background: #fff; box-shadow: 0 2px 8px rgba(0, 0, 0, .4); }
.poi-title { display: flex; align-items: center; justify-content: space-between; flex: 1; padding: 0 1px 0 3px; color: #999; }
.poi-title button { width: 18px; height: 18px; background: #d4d4d4; color: #e4e4e4; }
.poi-go { height: 23px; border: 1px solid #777; border-right-width: 2px; border-bottom-width: 2px; background: #f0f0f0; }

.dialog { left: 227px; top: 323px; width: 410px; border: 1px solid #3c8ad0; background: #f0f0f0; box-shadow: 0 3px 10px rgba(0, 0, 0, .4); }
.dlg-title { display: flex; justify-content: space-between; align-items: center; height: 25px; padding: 0 9px 0 3px; background: #fff; }
.dlg-title svg { display: block; }
.dlg-body { display: flex; flex-direction: column; gap: 7px; padding: 14px 13px 8px; }
fieldset { min-width: 0; margin: 0; padding: 2px 9px 6px 7px; border: 1px solid #dcdcdc; }
legend { padding: 0; line-height: 16px; }
textarea { display: block; width: 100%; height: 41px; padding: 2px; border: 1px solid #777; border-radius: 0; background: #fff; resize: none; outline: 0; font: 10px/12px "DejaVu Sans Mono", monospace; }
textarea:focus { border-color: #1c70b8; }
::selection { background: #0078d7; color: #fff; }
.dlg-btns { display: flex; justify-content: flex-end; gap: 15px; padding-top: 5px; }
.dlg-btns button { width: 72px; height: 23px; border: 1px solid #adadad; background: #e1e1e1; }
```

FILE: main.js
```js
const first = document.getElementById('hgap');
first.focus();
first.select();
```
